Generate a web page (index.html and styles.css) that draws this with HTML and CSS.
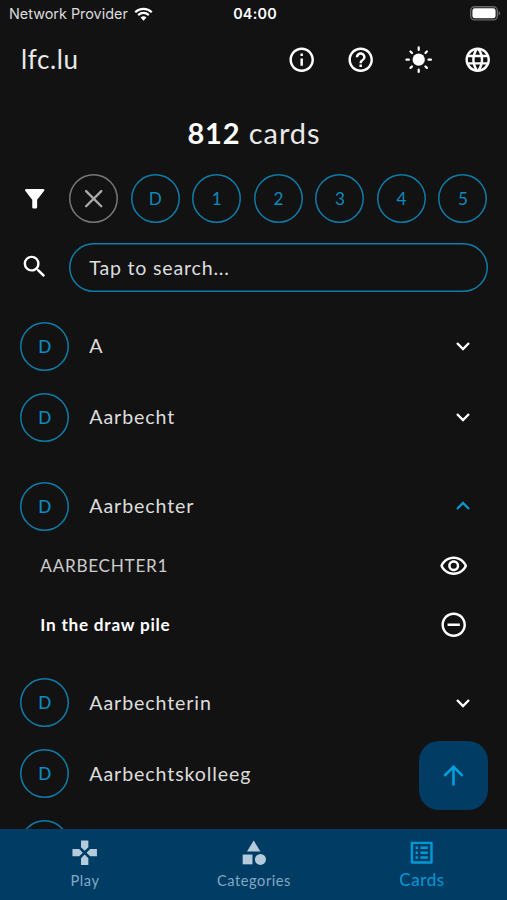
FILE: index.html
```html
<!DOCTYPE html>
<html lang="en">
<head>
    <meta charset="utf-8">
    <title>lfc.lu</title>
    <link rel="stylesheet" href="styles.css">
</head>
<body>
    <div class="app">
        <div class="status-bar">
            <div class="status-left">
                <span class="provider">Network Provider</span>
                <svg class="wifi" viewBox="0 0 20 14"><path d="M1.3 5.1a12.4 12.4 0 0 1 17.4 0M4.4 8.2a8 8 0 0 1 11.2 0" fill="none" stroke="currentColor" stroke-width="2.3"/><path d="M10 14l-3.1-3.2a4.4 4.4 0 0 1 6.2 0z"/></svg>
            </div>
            <span class="clock">04:00</span>
            <svg class="battery" viewBox="0 0 31 15"><rect x=".7" y=".7" width="26.6" height="13.2" rx="4" fill="none" stroke="#686868" stroke-width="1.4"/><rect x="2.4" y="2.3" width="23.2" height="10" rx="2.4"/><path d="M28.6 4.8q3 2.5 0 5z" fill="#686868"/></svg>
        </div>

        <header class="header">
            <div class="brand">lfc.lu</div>
            <div class="actions">
                <svg class="icon" viewBox="0 0 24 24"><path d="M11 7h2v2h-2zm0 4h2v6h-2zm1-9C6.48 2 2 6.48 2 12s4.48 10 10 10 10-4.48 10-10S17.52 2 12 2zm0 18c-4.41 0-8-3.59-8-8s3.59-8 8-8 8 3.59 8 8-3.59 8-8 8z"/></svg>
                <svg class="icon" viewBox="0 0 24 24"><path d="M11 18h2v-2h-2v2zm1-16C6.48 2 2 6.48 2 12s4.48 10 10 10 10-4.48 10-10S17.52 2 12 2zm0 18c-4.41 0-8-3.59-8-8s3.59-8 8-8 8 3.59 8 8-3.59 8-8 8zm0-14c-2.21 0-4 1.79-4 4h2c0-1.1.9-2 2-2s2 .9 2 2c0 2-3 1.75-3 5h2c0-2.25 3-2.5 3-5 0-2.21-1.79-4-4-4z"/></svg>
                <svg class="icon" viewBox="0 0 24 24"><circle cx="12" cy="12" r="5"/><path d="M12 2v2M12 20v2M2 12h2M20 12h2M5.3 5.3l1.2 1.2M17.5 17.5l1.2 1.2M5.3 18.7l1.2-1.2M17.5 6.5l1.2-1.2" fill="none" stroke="currentColor" stroke-width="1.8" stroke-linecap="round"/></svg>
                <svg class="icon" viewBox="0 0 24 24"><path d="M12 2C6.48 2 2 6.48 2 12s4.48 10 10 10 10-4.48 10-10S17.52 2 12 2zm6.93 6h-2.95a15.65 15.65 0 0 0-1.38-3.56A8.03 8.03 0 0 1 18.93 8zM12 4.04c.83 1.2 1.48 2.53 1.91 3.96h-3.82c.43-1.43 1.08-2.76 1.91-3.96zM4.26 14C4.1 13.36 4 12.69 4 12s.1-1.36.26-2h3.38c-.08.66-.14 1.32-.14 2s.06 1.34.14 2H4.26zm.82 2h2.95c.32 1.25.78 2.45 1.38 3.56A7.99 7.99 0 0 1 5.08 16zm2.95-8H5.08a7.99 7.99 0 0 1 4.33-3.56A15.65 15.65 0 0 0 8.03 8zM12 19.96c-.83-1.2-1.48-2.53-1.91-3.96h3.82c-.43 1.43-1.08 2.76-1.91 3.96zM14.34 14H9.66c-.09-.66-.16-1.32-.16-2s.07-1.35.16-2h4.68c.09.65.16 1.32.16 2s-.07 1.34-.16 2zm.25 5.56c.6-1.11 1.06-2.31 1.38-3.56h2.95a8.03 8.03 0 0 1-4.33 3.56zM16.36 14c.08-.66.14-1.32.14-2s-.06-1.34-.14-2h3.38c.16.64.26 1.31.26 2s-.1 1.36-.26 2h-3.38z"/></svg>
            </div>
        </header>

        <main class="content">
            <h1 class="title"><b>812</b> cards</h1>

            <div class="filters">
                <svg class="icon" viewBox="0 0 24 24"><path d="M4.25 5.61C6.27 8.2 10 13 10 13v6c0 .55.45 1 1 1h2c.55 0 1-.45 1-1v-6s3.72-4.8 5.74-7.39A.998.998 0 0 0 18.95 4H5.04c-.83 0-1.3.95-.79 1.61z"/></svg>
                <div class="chips">
                    <div class="chip chip-clear"><svg class="icon" viewBox="0 0 24 24"><path d="M5.8 5.8l12.4 12.4M18.2 5.8L5.8 18.2" fill="none" stroke="currentColor" stroke-width="1.9" stroke-linecap="round"/></svg></div>
                    <div class="chip">D</div>
                    <div class="chip">1</div>
                    <div class="chip">2</div>
                    <div class="chip">3</div>
                    <div class="chip">4</div>
                    <div class="chip">5</div>
                </div>
            </div>

            <div class="search">
                <svg class="icon" viewBox="0 0 24 24"><path d="M15.5 14h-.79l-.28-.27A6.471 6.471 0 0 0 16 9.5 6.5 6.5 0 1 0 9.5 16c1.61 0 3.09-.59 4.23-1.57l.27.28v.79l5 4.99L20.49 19l-4.99-5zm-6 0C7.01 14 5 11.99 5 9.5S7.01 5 9.5 5 14 7.01 14 9.5 11.99 14 9.5 14z"/></svg>
                <div class="search-box">Tap to search...</div>
            </div>

            <div class="list">
                <div class="row">
                    <div class="chip">D</div>
                    <span class="name">A</span>
                    <svg class="chevron" viewBox="0 0 16 10"><path d="M2 2l6 6 6-6"/></svg>
                </div>
                <div class="row">
                    <div class="chip">D</div>
                    <span class="name">Aarbecht</span>
                    <svg class="chevron" viewBox="0 0 16 10"><path d="M2 2l6 6 6-6"/></svg>
                </div>
                <div class="group">
                    <div class="row row-open">
                        <div class="chip">D</div>
                        <span class="name">Aarbechter</span>
                        <svg class="chevron" viewBox="0 0 16 10"><path d="M2 8l6-6 6 6"/></svg>
                    </div>
                    <div class="detail">
                        <span class="code">AARBECHTER1</span>
                        <svg class="icon" viewBox="0 0 24 24"><path d="M12 6c3.79 0 7.17 2.13 8.82 5.5C19.17 14.87 15.79 17 12 17s-7.17-2.13-8.82-5.5C4.83 8.13 8.21 6 12 6m0-2C7 4 2.73 7.11 1 11.5 2.73 15.89 7 19 12 19s9.27-3.11 11-7.5C21.27 7.11 17 4 12 4zm0 5a2.5 2.5 0 0 1 0 5 2.5 2.5 0 0 1 0-5m0-2c-2.48 0-4.5 2.02-4.5 4.5S9.52 16 12 16s4.5-2.02 4.5-4.5S14.48 7 12 7z" transform="translate(0 .5)"/></svg>
                    </div>
                    <div class="detail">
                        <span class="pile">In the draw pile</span>
                        <svg class="icon" viewBox="0 0 24 24"><path d="M7 11v2h10v-2H7zm5-9C6.48 2 2 6.48 2 12s4.48 10 10 10 10-4.48 10-10S17.52 2 12 2zm0 18c-4.41 0-8-3.59-8-8s3.59-8 8-8 8 3.59 8 8-3.59 8-8 8z"/></svg>
                    </div>
                </div>
                <div class="row">
                    <div class="chip">D</div>
                    <span class="name">Aarbechterin</span>
                    <svg class="chevron" viewBox="0 0 16 10"><path d="M2 2l6 6 6-6"/></svg>
                </div>
                <div class="row">
                    <div class="chip">D</div>
                    <span class="name">Aarbechtskolleeg</span>
                </div>
                <div class="row">
                    <div class="chip"></div>
                </div>
            </div>
        </main>

        <div class="fab">
            <svg class="icon" viewBox="0 0 24 24"><path d="M12 19.7V5.2M4.9 12.3L12 5.2l7.1 7.1" fill="none" stroke="currentColor" stroke-width="2"/></svg>
        </div>

        <nav class="tabs">
            <div class="tab">
                <svg class="icon" viewBox="0 0 24 24"><path d="M15 7.5V2H9v5.5l3 3 3-3zM7.5 9H2v6h5.5l3-3-3-3zM9 16.5V22h6v-5.5l-3-3-3 3zM16.5 9l-3 3 3 3H22V9h-5.5z"/></svg>
                <span>Play</span>
            </div>
            <div class="tab">
                <svg class="icon" viewBox="0 0 24 24"><path d="M12 2l-5.5 9h11z"/><circle cx="17.5" cy="17.5" r="4.5"/><path d="M3 13.5h8v8H3z"/></svg>
                <span>Categories</span>
            </div>
            <div class="tab tab-active">
                <svg class="icon" viewBox="0 0 24 24"><path d="M11 7h6v2h-6zm0 4h6v2h-6zm0 4h6v2h-6zM7 7h2v2H7zm0 4h2v2H7zm0 4h2v2H7zM20.1 3H3.9c-.5 0-.9.4-.9.9v16.2c0 .4.4.9.9.9h16.2c.4 0 .9-.5.9-.9V3.9c0-.5-.5-.9-.9-.9zM19 19H5V5h14v14z"/></svg>
                <span>Cards</span>
            </div>
        </nav>
    </div>
</body>
</html>
```

FILE: styles.css
```css
* {
    box-sizing: border-box;
}
body {
    margin: 0;
    background: #121212;
    color: #e8e8e8;
    font-family: Lato, sans-serif;
}
svg {
    display: block;
    flex: none;
    fill: currentColor;
}
.app {
    position: relative;
    display: flex;
    flex-direction: column;
    height: 900px;
    overflow: hidden;
}

/* Status bar */
.status-bar {
    display: grid;
    grid-template-columns: 1fr auto 1fr;
    align-items: center;
    height: 27px;
    padding: 0 6px 0 9px;
    font-family: Inter, sans-serif;
    font-size: 14.4px;
    color: #fff;
}
.status-left {
    display: flex;
    align-items: center;
    gap: 6px;
}
.provider {
    color: #dcdcdc;
    letter-spacing: 0;
}
.wifi {
    width: 19px;
    height: 14px;
}
.clock {
    font-weight: 600;
    letter-spacing: 0.2px;
}
.battery {
    width: 31px;
    height: 15px;
    justify-self: end;
}

/* Header */
.header {
    display: flex;
    align-items: center;
    justify-content: space-between;
    height: 65px;
    padding: 0 14.5px 0 21px;
}
.brand {
    padding-bottom: 2px;
    font-size: 26px;
    letter-spacing: 0.6px;
}
.actions {
    display: flex;
    gap: 29.3px;
    color: #fff;
}
.icon {
    width: 29.4px;
    height: 29.4px;
}

.content {
    flex: 1;
    min-height: 0;
    overflow: hidden;
    padding: 0 19.5px 0 20.3px;
}
.title {
    margin: 23px 0 23.4px;
    font-size: 29px;
    font-weight: 400;
    line-height: 36px;
    letter-spacing: 0.9px;
    text-align: center;
}
.title b {
    color: #fff;
}

/* Filter and search */
.filters, .search {
    display: flex;
    align-items: center;
    gap: 19.6px;
    height: 49px;
    color: #fff;
}
.search {
    margin-top: 19.2px;
}
.chips {
    flex: 1;
    display: flex;
    justify-content: space-between;
}
.chip {
    flex: none;
    display: flex;
    align-items: center;
    justify-content: center;
    width: 49px;
    height: 49px;
    border-radius: 50%;
    box-shadow: inset 0 0 0 1.5px #0f7ba6;
    color: #0c8abd;
    font-size: 17.2px;
}
.chip-clear {
    box-shadow: inset 0 0 0 1.5px #777;
    color: #aaa;
}
.search-box {
    flex: 1;
    height: 49px;
    padding-left: 20px;
    border-radius: 25px;
    box-shadow: inset 0 0 0 1.5px #0f7ba6;
    color: #ddd;
    font-size: 19.6px;
    line-height: 49px;
    letter-spacing: 0.8px;
}

/* Cards */
.list {
    margin-top: 19.4px;
}
.row {
    display: flex;
    align-items: center;
    height: 71px;
    padding-right: 16.5px;
}
.row .chip {
    font-weight: 500;
}
.name {
    flex: 1;
    padding: 0 0 1px 20px;
    font-size: 19.6px;
    letter-spacing: 0.9px;
    color: #ddd;
}
.chevron {
    width: 16px;
    height: 10px;
    fill: none;
    stroke: #fff;
    stroke-width: 2.4;
}
.group {
    padding: 24px 0 13.5px;
}
.row-open {
    height: 59px;
}
.row-open .chevron {
    stroke: #0f93cb;
}
.detail {
    display: flex;
    align-items: center;
    justify-content: space-between;
    height: 59px;
    padding: 0 19.5px 0 20px;
    color: #fff;
}
.code {
    font-size: 17.2px;
    letter-spacing: 0.7px;
    color: #ccc;
}
.pile {
    font-size: 17.2px;
    font-weight: 700;
    letter-spacing: 0.75px;
}

.fab {
    position: absolute;
    right: 19.5px;
    bottom: 90.5px;
    display: flex;
    align-items: center;
    justify-content: center;
    width: 68.5px;
    height: 68.5px;
    border-radius: 20px;
    background: #003c64;
    color: #00a0dc;
}
.fab .icon {
    width: 31px;
    height: 31px;
}

/* Bottom tabs */
.tabs {
    display: grid;
    grid-template-columns: repeat(3, 1fr);
    height: 71px;
    background: #003c64;
}
.tab {
    display: flex;
    flex-direction: column;
    align-items: center;
    padding: 9px 0 0 1px;
    color: #b5cbdc;
    font-size: 14.6px;
    line-height: 28px;
    letter-spacing: 0.55px;
}
.tab span {
    color: #83a8c4;
}
.tab-active, .tab-active span {
    color: #0099d6;
}
.tab-active {
    padding: 8.5px 1px 0 0;
    font-size: 17px;
    line-height: 26px;
}
```
